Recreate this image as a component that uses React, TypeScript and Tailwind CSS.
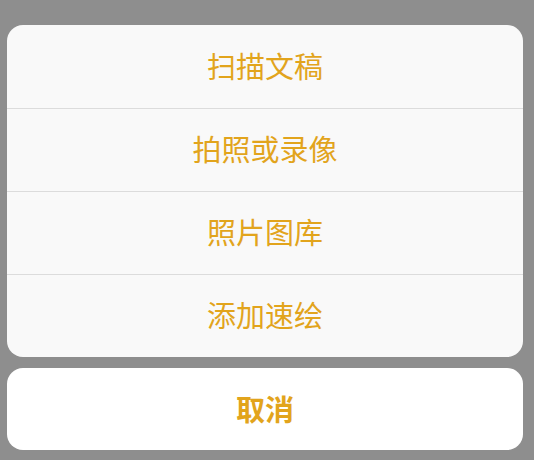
const items = ['扫描文稿', '拍照或录像', '照片图库', '添加速绘']

export default function App() {
  return (
    <div
      className="flex h-[460px] w-[534px] flex-col bg-[#8e8e8e] pl-[7px] pt-[25px]"
      style={{ fontFamily: '"Noto Sans CJK SC", "Noto Sans", sans-serif' }}
    >
      <div className="flex w-[516px] flex-col overflow-hidden rounded-[16px] bg-[#f9f9f9]">
        {items.map((label, i) => (
          <button
            key={label}
            className={
              'flex h-[83px] items-center justify-center pb-[3px] text-[29px] leading-none text-[#e2a41c] ' +
              (i > 0 ? 'border-t border-[#dcdcdc]' : '')
            }
          >
            {label}
          </button>
        ))}
      </div>
      <button className="mt-[11px] flex h-[82px] w-[516px] items-center justify-center rounded-[16px] bg-white pb-[1px] text-[29px] font-semibold leading-none text-[#e2a41c]">
        取消
      </button>
    </div>
  )
}
